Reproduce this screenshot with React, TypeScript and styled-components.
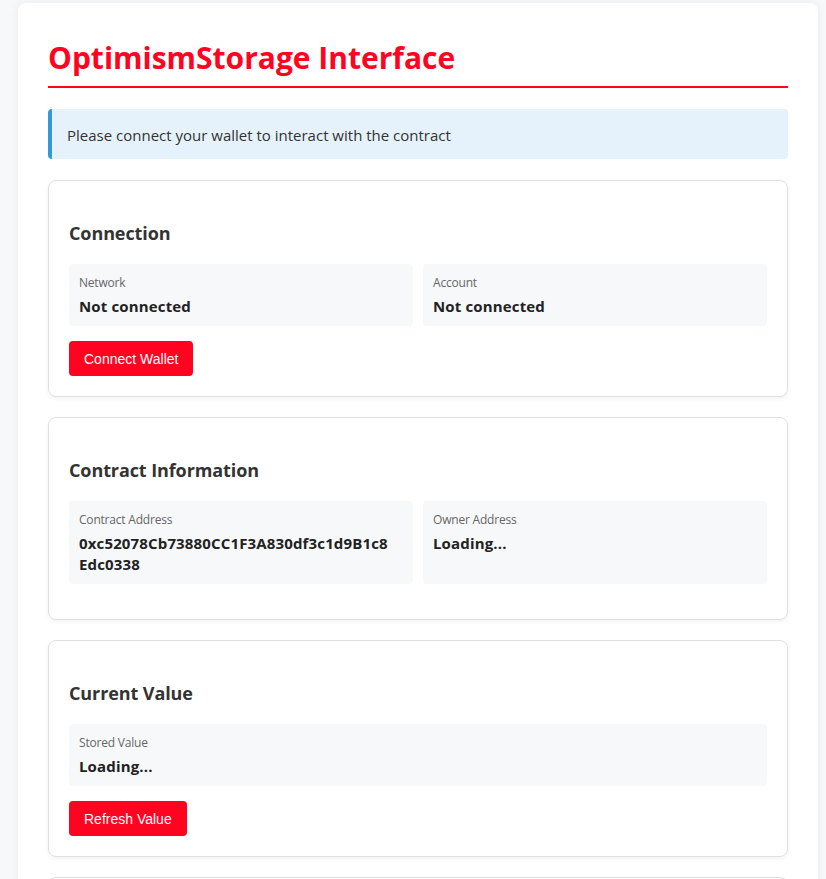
import React from "react";
import styled, { createGlobalStyle } from "styled-components";

const GlobalStyle = createGlobalStyle`
  html, body {
    margin: 0;
    padding: 0;
    background: #f7f8fa;
  }
  body {
    font-family: "Open Sans", "Noto Sans", sans-serif;
    color: #333;
  }
  * { box-sizing: border-box; }
`;

const Page = styled.div`
  padding: 3px 8px 0 18px;
`;

const Container = styled.main`
  width: 800px;
  background: #fff;
  border-radius: 8px;
  box-shadow: 0 0 10px rgba(0, 0, 0, 0.06);
  padding: 30px 30px 20px;
`;

const Title = styled.h1`
  margin: 0 0 21px;
  padding: 3px 0 6px;
  font-size: 30px;
  line-height: 44px;
  font-weight: 700;
  color: #ff0420;
  border-bottom: 2px solid #ff0420;
`;

const Alert = styled.div`
  background: #e6f2fb;
  border-left: 4px solid #3498db;
  border-radius: 4px;
  padding: 16px 15px 14px;
  font-size: 15px;
  line-height: 20px;
  color: #333;
  margin-bottom: 21px;
`;

const Card = styled.section`
  border: 1px solid #e0e0e0;
  border-radius: 8px;
  box-shadow: 0 2px 4px rgba(0, 0, 0, 0.05);
  padding: 20px;
  margin-bottom: 20px;
`;

const CardTitle = styled.h2`
  margin: 19px 0 17px;
  font-size: 18px;
  line-height: 27px;
  font-weight: 700;
  color: #333;
  letter-spacing: -0.1px;
`;

const InfoGrid = styled.div<{ $cols: number }>`
  display: grid;
  grid-template-columns: repeat(${(p) => p.$cols}, 1fr);
  gap: 10px;
  margin-bottom: 15px;
`;

const InfoBox = styled.div`
  background: #f7f8fa;
  border-radius: 4px;
  padding: 10px 10px 9px;
`;

const Label = styled.div`
  font-size: 12px;
  line-height: 17px;
  color: #666;
  margin-bottom: 5px;
  letter-spacing: -0.2px;
`;

const Value = styled.div<{ $maxWidth?: number }>`
  font-size: 15px;
  line-height: 21px;
  font-weight: 700;
  color: #222;
  letter-spacing: 0.15px;
  word-break: break-all;
  max-width: ${(p) => (p.$maxWidth ? `${p.$maxWidth}px` : "none")};
`;

const Button = styled.button`
  display: inline-block;
  background: #ff0420;
  color: #fff;
  border: none;
  border-radius: 4px;
  padding: 0 15px;
  height: 35px;
  font-family: "Liberation Sans", Arial, sans-serif;
  font-size: 14px;
  cursor: pointer;
`;

const Info = ({ label, value, maxWidth }: { label: string; value: string; maxWidth?: number }) => (
  <InfoBox>
    <Label>{label}</Label>
    <Value $maxWidth={maxWidth}>{value}</Value>
  </InfoBox>
);

export default function App() {
  return (
    <>
      <GlobalStyle />
      <Page>
        <Container>
          <Title>OptimismStorage Interface</Title>
          <Alert>Please connect your wallet to interact with the contract</Alert>

          <Card>
            <CardTitle>Connection</CardTitle>
            <InfoGrid $cols={2}>
              <Info label="Network" value="Not connected" />
              <Info label="Account" value="Not connected" />
            </InfoGrid>
            <Button>Connect Wallet</Button>
          </Card>

          <Card>
            <CardTitle>Contract Information</CardTitle>
            <InfoGrid $cols={2}>
              <Info
                label="Contract Address"
                value="0xc52078Cb73880CC1F3A830df3c1d9B1c8Edc0338"
                maxWidth={316}
              />
              <Info label="Owner Address" value="Loading..." />
            </InfoGrid>
          </Card>

          <Card>
            <CardTitle>Current Value</CardTitle>
            <InfoGrid $cols={1}>
              <Info label="Stored Value" value="Loading..." />
            </InfoGrid>
            <Button>Refresh Value</Button>
          </Card>

          <Card>
            <CardTitle>Update Value</CardTitle>
          </Card>
        </Container>
      </Page>
    </>
  );
}
